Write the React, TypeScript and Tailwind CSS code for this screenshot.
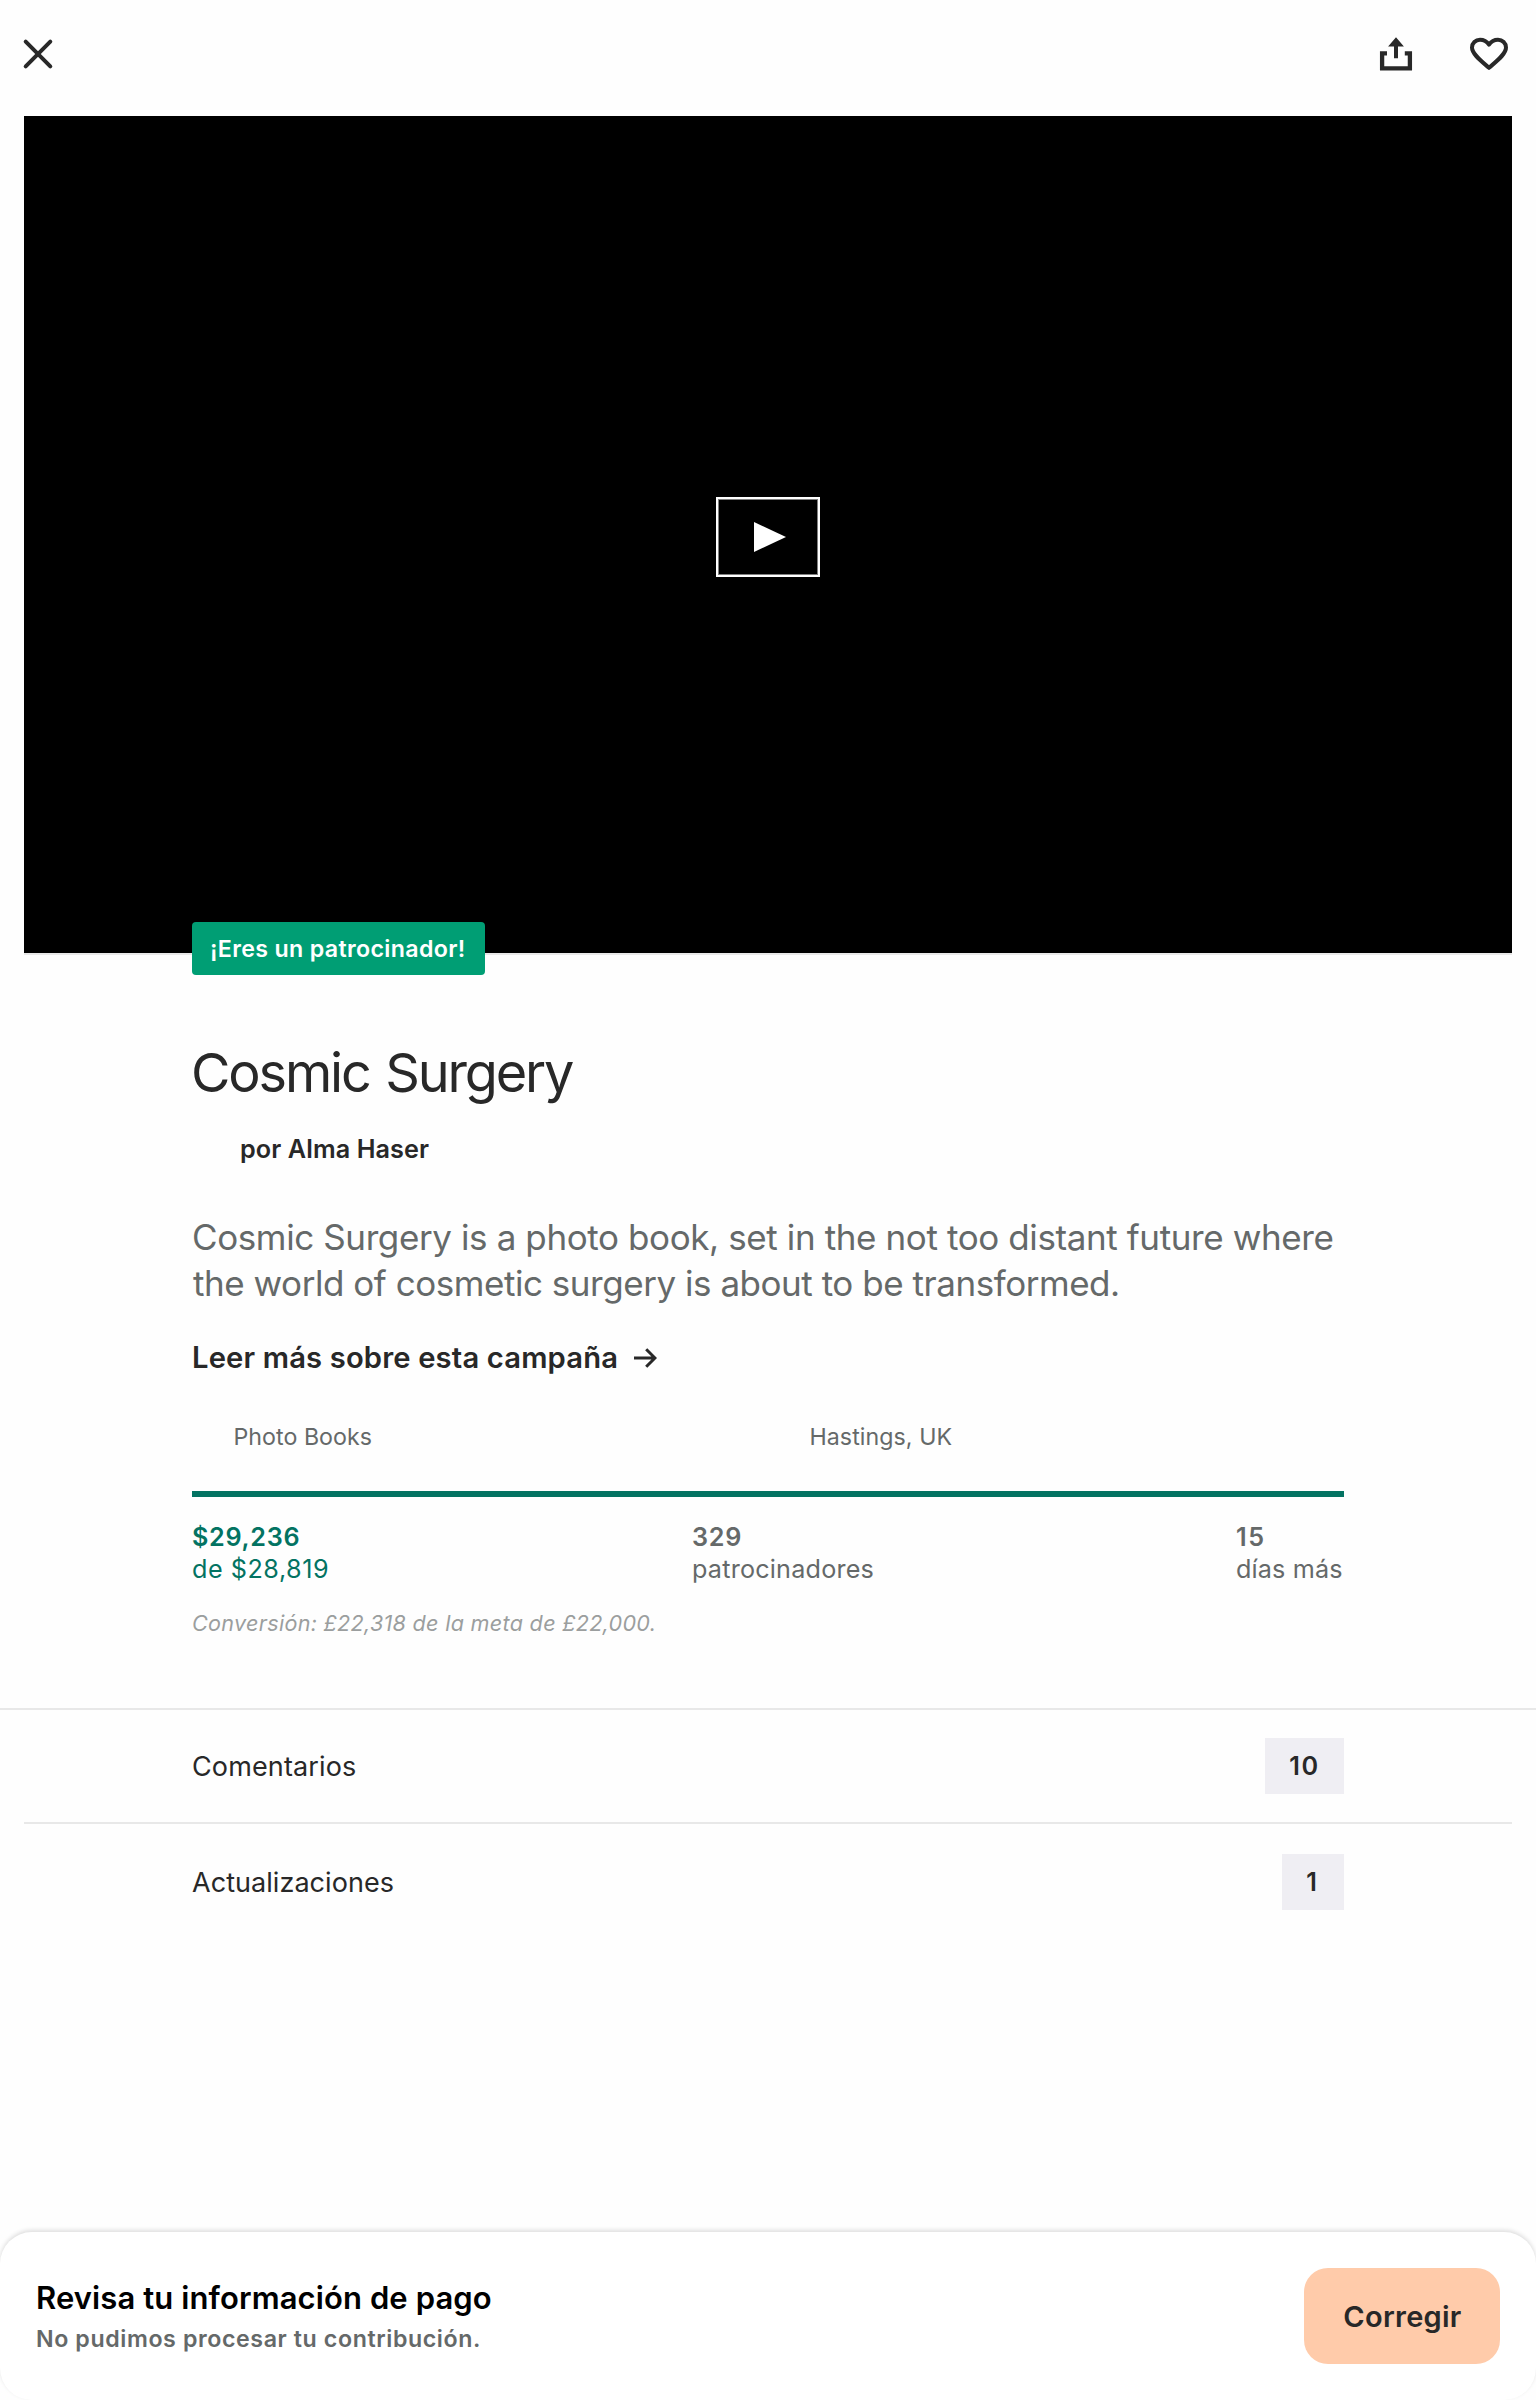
import type { ReactNode } from "react";

function CloseIcon() {
  return (
    <svg width="32" height="32" viewBox="0 0 32 32" fill="none" stroke="#282828" strokeWidth="4" strokeLinecap="round">
      <path d="M3.7 3.7 28.3 28.3M28.3 3.7 3.7 28.3" />
    </svg>
  );
}

function ShareIcon() {
  return (
    <svg width="34" height="34" viewBox="0 0 34 34" fill="none">
      <path d="M8 16.4H3.1V31.4H30.9V16.4H25.8" stroke="#282828" strokeWidth="4.3" />
      <path d="M17 .2 24.9 9.6H19V21.2H15V9.6H9.1Z" fill="#282828" />
    </svg>
  );
}

function HeartIcon() {
  return (
    <svg width="40" height="36" viewBox="0 0 40 36" fill="none" stroke="#282828" strokeWidth="4" strokeLinejoin="round">
      <path d="M20 31.8C12 24.8 3 18.2 3 11.6 3 7.2 6.6 3.8 11 3.8 14.8 3.8 17.8 5.4 20 8.6 22.2 5.4 25.2 3.8 29 3.8 33.4 3.8 37 7.2 37 11.6 37 18.2 28 24.8 20 31.8Z" />
    </svg>
  );
}

function LinkRow({ label, count }: { label: ReactNode; count: ReactNode }) {
  return (
    <div className="flex h-full items-center justify-between px-[192px]">
      {label}
      {count}
    </div>
  );
}

export default function App() {
  return (
    <div className="flex h-[2400px] w-[1536px] flex-col overflow-hidden bg-[#fefefe] font-['Inter',sans-serif] text-[#282828]">
      <header className="flex h-[116px] shrink-0 items-start justify-between pl-[22px] pr-[27px]">
        <button className="mt-[38px]" aria-label="Cerrar"><CloseIcon /></button>
        <div className="flex items-start gap-[56px]">
          <button className="mt-[37px]" aria-label="Compartir"><ShareIcon /></button>
          <button className="mt-[36px]" aria-label="Guardar"><HeartIcon /></button>
        </div>
      </header>

      <section className="relative mx-6 flex h-[839px] shrink-0 items-start justify-center border-b-2 border-[#e8e8e8] bg-black">
        <button className="mt-[381px] flex h-20 w-[104px] items-center justify-center border-2 border-white shadow-[inset_0_0_0_1px_#808080]" aria-label="Reproducir">
          <svg width="32" height="30" viewBox="0 0 32 30" className="ml-1"><path d="M0 0 32 15 0 30Z" fill="#fff" /></svg>
        </button>
        <div className="absolute left-[168px] top-[806px] h-[53px] w-[293px] whitespace-nowrap rounded-[4px] bg-[#009e74] pl-[18px] text-[23.2px] font-semibold leading-[55px] tracking-[0.339px] text-white">
          ¡Eres un patrocinador!
        </div>
      </section>

      <main className="h-[753px] shrink-0 whitespace-nowrap px-[192px] pt-[86px]">
        <h1 className="-ml-px text-[54px] leading-[64px] tracking-[-2.15px] [word-spacing:2.5px]">Cosmic Surgery</h1>
        <p className="ml-12 mt-[29px] text-[25.2px] font-semibold leading-[30px] tracking-[0.094px]">por Alma Haser</p>
        <p className="mt-[50px] text-[35px] leading-[46px] tracking-[-0.39px] text-[#656969]">
          Cosmic Surgery is a photo book, set in the not too distant future where
        </p>
        <p className="ml-px text-[35px] leading-[46px] tracking-[-0.46px] text-[#656969]">
          the world of cosmetic surgery is about to be transformed.
        </p>
        <div className="mt-[34px] flex h-9 items-center">
          <span className="text-[29.2px] font-semibold leading-9 tracking-[0.15px]">Leer más sobre esta campaña</span>
          <svg width="24" height="20" viewBox="0 0 24 20" className="ml-[15px]" fill="none" stroke="#282828" strokeWidth="3">
            <path d="M1 10H22M13.2 1.2 22 10 13.2 18.8" />
          </svg>
        </div>
        <div className="mt-[47px] grid grid-cols-2 text-[23.2px] leading-7 text-[#656969]">
          <span className="pl-[41.5px] tracking-[0.03px]">Photo Books</span>
          <span className="pl-[41.5px] tracking-[0.06px]">Hastings, UK</span>
        </div>
        <div className="mt-10 h-1.5 bg-[#037362]" />
        <div className="mt-6 grid grid-cols-[500px_544px_1fr] text-[25.2px] leading-8 text-[#656969]">
          <div className="text-[#037362]">
            <p className="font-semibold tracking-[0.7px]">$29,236</p>
            <p className="tracking-[0.528px]">de $28,819</p>
          </div>
          <div>
            <p className="font-semibold tracking-[0.8px]">329</p>
            <p className="tracking-[0.2px]">patrocinadores</p>
          </div>
          <div>
            <p className="font-semibold tracking-[1.5px]">15</p>
            <p className="tracking-[0.15px]">días más</p>
          </div>
        </div>
        <p className="mt-6 text-[21.6px] italic leading-7 tracking-[0.29px] text-[#9b9e9e]">
          Conversión: £22,318 de la meta de £22,000.
        </p>
      </main>

      <section className="shrink-0 border-t-2 border-[#e8e8e8]">
        <div className="h-28">
          <LinkRow
            label={<span className="pt-0.5 text-[27px] leading-8 tracking-[0.13px]">Comentarios</span>}
            count={<span className="h-14 w-[79px] bg-[#efeef3] text-center text-[25.2px] font-semibold leading-[56px] tracking-[1.5px]">10</span>}
          />
        </div>
        <div className="mx-6 h-0.5 bg-[#e8e8e8]" />
        <div className="h-[116px]">
          <LinkRow
            label={<span className="pt-0.5 text-[27px] leading-8 tracking-[0.05px]">Actualizaciones</span>}
            count={<span className="h-14 w-[62px] bg-[#efeef3] pr-[3px] text-center text-[25.2px] font-semibold leading-[56px]">1</span>}
          />
        </div>
      </section>

      <footer className="mt-auto flex h-[168px] shrink-0 items-center justify-between whitespace-nowrap rounded-[32px] bg-white px-9 shadow-[0_-2px_4px_rgba(0,0,0,0.13)]">
        <div>
          <p className="text-[31px] font-semibold leading-[38px] tracking-[0.1px] text-black">Revisa tu información de pago</p>
          <p className="mt-[7px] text-[23.2px] font-semibold leading-[30px] tracking-[0.594px] text-[#656969]">No pudimos procesar tu contribución.</p>
        </div>
        <button className="h-24 w-[196px] rounded-[24px] bg-[#ffcbaa] pl-px pt-px text-[29px] font-semibold tracking-[0.275px]">Corregir</button>
      </footer>
    </div>
  );
}
